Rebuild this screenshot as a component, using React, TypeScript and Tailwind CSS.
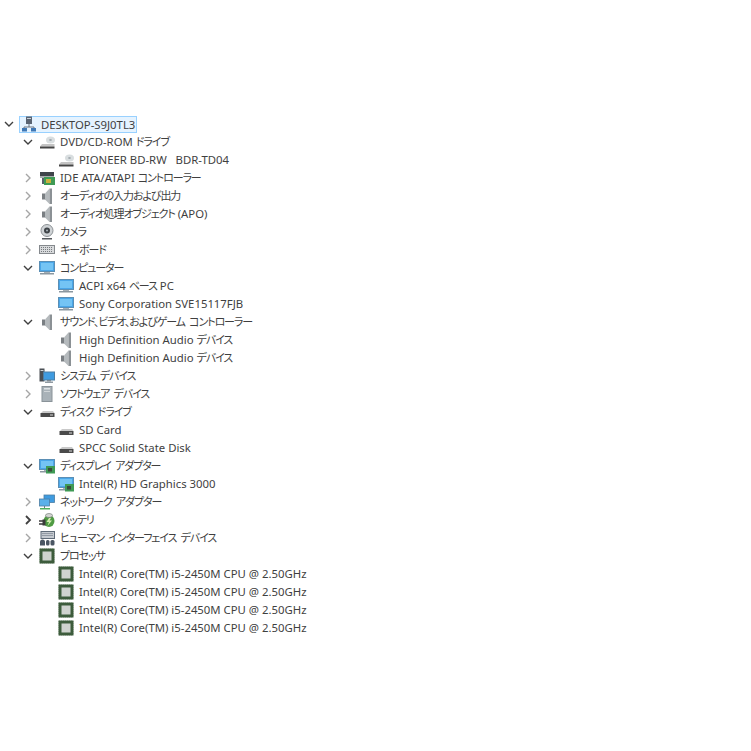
type IconName =
  | "root"
  | "dvd"
  | "ide"
  | "speaker"
  | "camera"
  | "keyboard"
  | "monitor"
  | "system"
  | "software"
  | "disk"
  | "display"
  | "network"
  | "battery"
  | "hid"
  | "cpu";

type Item = {
  label: string;
  icon: IconName;
  level: number;
  open?: boolean;
  dark?: boolean;
};

const items: Item[] = [
  { label: "DESKTOP-S9J0TL3", icon: "root", level: 0, open: true },
  { label: "DVD/CD-ROM ドライブ", icon: "dvd", level: 1, open: true },
  { label: "PIONEER BD-RW   BDR-TD04", icon: "dvd", level: 2 },
  { label: "IDE ATA/ATAPI コントローラー", icon: "ide", level: 1, open: false },
  { label: "オーディオの入力および出力", icon: "speaker", level: 1, open: false },
  { label: "オーディオ処理オブジェクト (APO)", icon: "speaker", level: 1, open: false },
  { label: "カメラ", icon: "camera", level: 1, open: false },
  { label: "キーボード", icon: "keyboard", level: 1, open: false },
  { label: "コンピューター", icon: "monitor", level: 1, open: true },
  { label: "ACPI x64 ベース PC", icon: "monitor", level: 2 },
  { label: "Sony Corporation SVE15117FJB", icon: "monitor", level: 2 },
  { label: "サウンド、ビデオ、およびゲーム コントローラー", icon: "speaker", level: 1, open: true },
  { label: "High Definition Audio デバイス", icon: "speaker", level: 2 },
  { label: "High Definition Audio デバイス", icon: "speaker", level: 2 },
  { label: "システム デバイス", icon: "system", level: 1, open: false },
  { label: "ソフトウェア デバイス", icon: "software", level: 1, open: false },
  { label: "ディスク ドライブ", icon: "disk", level: 1, open: true },
  { label: "SD Card", icon: "disk", level: 2 },
  { label: "SPCC Solid State Disk", icon: "disk", level: 2 },
  { label: "ディスプレイ アダプター", icon: "display", level: 1, open: true },
  { label: "Intel(R) HD Graphics 3000", icon: "display", level: 2 },
  { label: "ネットワーク アダプター", icon: "network", level: 1, open: false },
  { label: "バッテリ", icon: "battery", level: 1, open: false, dark: true },
  { label: "ヒューマン インターフェイス デバイス", icon: "hid", level: 1, open: false },
  { label: "プロセッサ", icon: "cpu", level: 1, open: true },
  { label: "Intel(R) Core(TM) i5-2450M CPU @ 2.50GHz", icon: "cpu", level: 2 },
  { label: "Intel(R) Core(TM) i5-2450M CPU @ 2.50GHz", icon: "cpu", level: 2 },
  { label: "Intel(R) Core(TM) i5-2450M CPU @ 2.50GHz", icon: "cpu", level: 2 },
  { label: "Intel(R) Core(TM) i5-2450M CPU @ 2.50GHz", icon: "cpu", level: 2 },
];

function Monitor() {
  return (
    <>
      <rect x="0.5" y="1.5" width="15" height="10" fill="#4aa6e8" stroke="#5b8fb5" />
      <rect x="2" y="3" width="12" height="7" fill="#74c4f4" />
      <rect x="5" y="12" width="6" height="1" fill="#a5afb6" />
      <rect x="1" y="13" width="14" height="1.5" fill="#8b97a0" />
    </>
  );
}

function Drive() {
  return (
    <>
      <path d="M2 9 L4 7 H14 L15.5 9 Z" fill="#c9c9c9" />
      <rect x="1.5" y="9" width="14" height="4" fill="#4a4a4a" />
      <rect x="11" y="10.5" width="3" height="1" fill="#d8d8d8" />
    </>
  );
}

function Icon({ name }: { name: IconName }) {
  let body = <Monitor />;
  if (name === "root") {
    body = (
      <>
        <rect x="5" y="0.5" width="6" height="7.5" fill="#5a6472" />
        <rect x="6" y="2" width="4" height="1" fill="#c8d0d8" />
        <path d="M8 8 V11 M3 11 H13 M3 11 V12 M13 11 V12" stroke="#6b7480" fill="none" />
        <rect x="1" y="12" width="5" height="3.5" fill="#3f78b5" />
        <rect x="10" y="12" width="5" height="3.5" fill="#3f78b5" />
      </>
    );
  }
  if (name === "dvd") {
    body = (
      <>
        <ellipse cx="11.5" cy="6" rx="4.5" ry="3.5" fill="#d9dee0" />
        <ellipse cx="11.5" cy="6" rx="1.4" ry="0.9" fill="#a3abb0" />
        <path d="M1 12.5 L3 10 H15.5 V12.5 Z" fill="#c4c4c4" />
        <rect x="1" y="12.5" width="14.5" height="2" fill="#454545" />
      </>
    );
  }
  if (name === "disk") body = <Drive />;
  if (name === "ide") {
    body = (
      <>
        <rect x="1" y="2" width="14" height="4" fill="#3f444a" />
        <rect x="1" y="6" width="14" height="2" fill="#a9adb0" />
        <rect x="5" y="7" width="11" height="8" fill="#3f9a55" />
        <rect x="7" y="9" width="5" height="4" fill="#c9b23d" />
        <rect x="3" y="8" width="2" height="6" fill="#55606a" />
      </>
    );
  }
  if (name === "speaker") {
    body = (
      <>
        <rect x="3" y="5.5" width="3" height="6" fill="#7a7f83" />
        <path d="M6 5.5 L10.5 0.5 V16 L6 11.5 Z" fill="#b5babd" />
        <path d="M10.5 0.5 H13 V16 H10.5 Z" fill="#8b9195" />
      </>
    );
  }
  if (name === "camera") {
    body = (
      <>
        <circle cx="8" cy="6.5" r="6" fill="#cfd3d6" stroke="#8d9296" />
        <circle cx="8" cy="6.5" r="3" fill="#3f4448" />
        <circle cx="8" cy="6.5" r="1" fill="#aab4ba" />
        <rect x="3" y="14" width="10" height="1.5" fill="#55595d" />
      </>
    );
  }
  if (name === "keyboard") {
    body = (
      <>
        <rect x="0.5" y="3.5" width="15" height="8" fill="#d8dadc" stroke="#85898d" />
        <path d="M2 5.5 H14 M2 7.5 H14 M2 9.5 H14" stroke="#777b7f" strokeDasharray="1 1" />
      </>
    );
  }
  if (name === "system") {
    body = (
      <>
        <rect x="0.5" y="0.5" width="5" height="13" fill="#4a4f55" />
        <rect x="1.5" y="2" width="3" height="1" fill="#d0d4d8" />
        <rect x="4.5" y="4" width="11" height="8" fill="#3f9be0" stroke="#4d7ea3" />
        <rect x="8" y="12" width="4" height="1.5" fill="#7f8a92" />
        <rect x="6" y="13.5" width="8" height="1.5" fill="#8f9aa2" />
      </>
    );
  }
  if (name === "software") {
    body = (
      <>
        <rect x="3" y="0.5" width="10" height="15" fill="#a9b2b8" stroke="#8a9399" />
        <rect x="5" y="2" width="6" height="1.5" fill="#dfe3e6" />
        <rect x="5" y="5" width="6" height="1" fill="#d0d5d8" />
      </>
    );
  }
  if (name === "display") {
    body = (
      <>
        <Monitor />
        <rect x="7" y="8" width="9" height="7.5" fill="#3f9a55" />
        <rect x="9" y="10" width="4" height="3.5" fill="#3a4a3a" />
      </>
    );
  }
  if (name === "network") {
    body = (
      <>
        <rect x="5" y="1" width="10.5" height="7.5" fill="#3f9be0" stroke="#4d7ea3" strokeWidth="0.8" />
        <rect x="0.5" y="5" width="10" height="7" fill="#5ab0ea" stroke="#4d7ea3" strokeWidth="0.8" />
        <path d="M5.5 12 V14" stroke="#6a7a84" />
        <rect x="1" y="14" width="10" height="1.5" fill="#4fae5e" />
      </>
    );
  }
  if (name === "battery") {
    body = (
      <>
        <ellipse cx="10" cy="9" rx="5.5" ry="6" fill="#4f9b43" />
        <ellipse cx="10" cy="3.5" rx="3.5" ry="2" fill="#d3d6d2" stroke="#66706a" strokeWidth="0.6" />
        <path d="M10 6 L7.5 10 H10 L8.5 14 L13 8.5 H10.5 L12 6 Z" fill="#d4f0b0" />
        <path d="M0 9 H5 M0 12 H5" stroke="#3a3a3a" strokeWidth="1.3" />
        <rect x="3.5" y="7.5" width="3" height="6" fill="#3a3a3a" />
      </>
    );
  }
  if (name === "hid") {
    body = (
      <>
        <rect x="2" y="1.5" width="13.5" height="7" fill="#c5cad0" stroke="#5f6b78" />
        <path d="M3.5 3.5 H14 M3.5 5.5 H14" stroke="#5f6b78" strokeDasharray="1 1" />
        <path d="M1 15.5 V12 Q1 9.5 3.5 9.5 Q6 9.5 6 12 V15.5 Z" fill="#4a5663" />
        <rect x="7" y="10" width="3.5" height="5.5" rx="1.5" fill="#4a5663" />
        <rect x="11.5" y="10" width="4" height="5.5" rx="1.5" fill="#4a5663" />
      </>
    );
  }
  if (name === "cpu") {
    body = (
      <>
        <rect x="0.5" y="0.5" width="15" height="15" fill="#3d5c3c" />
        <rect x="3.5" y="3.5" width="9" height="9" fill="#cfd3cf" />
        <path d="M0 1 V15 M16 1 V15 M1 0 H15 M1 16 H15" stroke="#6b8268" strokeDasharray="1 1" strokeWidth="0.8" />
      </>
    );
  }
  return (
    <svg width="16" height="16" viewBox="0 0 16 16" className="shrink-0">
      {body}
    </svg>
  );
}

function Chevron({ open, dark }: { open: boolean; dark?: boolean }) {
  const color = open || dark ? "#404040" : "#a6a6a6";
  return (
    <svg width="10" height="10" viewBox="0 0 10 10" className="shrink-0">
      <path
        d={open ? "M1 3 L5 7 L9 3" : "M3 1 L7 5 L3 9"}
        fill="none"
        stroke={color}
        strokeWidth={dark ? "1.8" : "1.4"}
      />
    </svg>
  );
}

// the original's Japanese font is much narrower than Noto, so kana runs get their own span
function Label({ text }: { text: string }) {
  const runs = text.match(/[\u3000-\u9fff]+(?: [\u3000-\u9fff]+)*|[^\u3000-\u9fff]+/g) ?? [];
  return (
    <>
      {runs.map((run, i) =>
        /[\u3000-\u9fff]/.test(run) ? (
          <span key={i} className="text-[11px] tracking-[-1.1px] [word-spacing:2.5px] [font-feature-settings:'palt']">
            {run}
          </span>
        ) : (
          <span key={i}>{run}</span>
        )
      )}
    </>
  );
}

function Row({ item }: { item: Item }) {
  if (item.level === 0) {
    return (
      <div className="flex h-[18px] items-center pl-1">
        <div className="flex w-[15px] shrink-0 items-center">
          <Chevron open />
        </div>
        <div className="flex h-[17px] items-center gap-[4px] border border-[#99d1ff] bg-[#e5f3ff] pr-[1px] pl-[1px]">
          <Icon name={item.icon} />
          <span className="whitespace-pre">{item.label}</span>
        </div>
      </div>
    );
  }
  return (
    <div className={`flex h-[18px] items-center ${item.level === 1 ? "pl-[23px]" : "pl-[42px]"}`}>
      <div className="flex w-[16px] shrink-0 items-center">
        {item.open !== undefined && <Chevron open={item.open} dark={item.dark} />}
      </div>
      <div className="flex w-[21px] shrink-0 items-center">
        <Icon name={item.icon} />
      </div>
      <span className="whitespace-pre leading-[18px]">
        <Label text={item.label} />
      </span>
    </div>
  );
}

export default function App() {
  return (
    <main className="h-[751px] w-[751px] overflow-hidden bg-white pt-[115px] font-['Noto_Sans','Noto_Sans_CJK_JP',sans-serif] text-[11.35px] text-[#3f3f3f]">
      {items.map((item, i) => (
        <Row key={i} item={item} />
      ))}
    </main>
  );
}
